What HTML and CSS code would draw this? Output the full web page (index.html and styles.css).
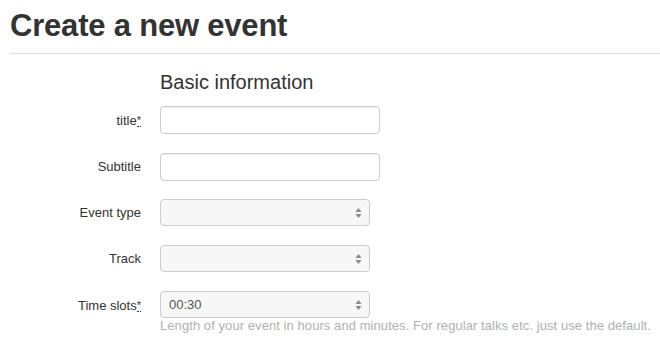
FILE: index.html
```html
<!DOCTYPE html>
<html>
<head>
<meta charset="utf-8">
<link rel="stylesheet" href="styles.css">
</head>
<body>
<h1 class="page-title">Create a new event</h1>
<form class="form">
  <div class="legend">Basic information</div>
  <div class="rows">
    <div class="row">
      <label class="label">title<abbr class="req" title="required">*</abbr></label>
      <div class="field"><input class="input" type="text"></div>
    </div>
    <div class="row">
      <label class="label">Subtitle</label>
      <div class="field"><input class="input" type="text"></div>
    </div>
    <div class="row">
      <label class="label">Event type</label>
      <div class="field"><div class="select"><span class="value"></span><span class="arrows"><svg width="7" height="12" viewBox="0 0 7 12"><path d="M3.5 1 L6.5 5 H0.5 Z" fill="#8a8a8a"/><path d="M3.5 11 L6.5 7 H0.5 Z" fill="#8a8a8a"/></svg></span></div></div>
    </div>
    <div class="row">
      <label class="label">Track</label>
      <div class="field"><div class="select"><span class="value"></span><span class="arrows"><svg width="7" height="12" viewBox="0 0 7 12"><path d="M3.5 1 L6.5 5 H0.5 Z" fill="#8a8a8a"/><path d="M3.5 11 L6.5 7 H0.5 Z" fill="#8a8a8a"/></svg></span></div></div>
    </div>
    <div class="row">
      <label class="label">Time slots<abbr class="req" title="required">*</abbr></label>
      <div class="field"><div class="select"><span class="value">00:30</span><span class="arrows"><svg width="7" height="12" viewBox="0 0 7 12"><path d="M3.5 1 L6.5 5 H0.5 Z" fill="#8a8a8a"/><path d="M3.5 11 L6.5 7 H0.5 Z" fill="#8a8a8a"/></svg></span></div>
      <p class="help">Length of your event in hours and minutes. For regular talks etc. just use the default.</p></div>
    </div>
  </div>
</form>
</body>
</html>
```
FILE: styles.css
```css
html, body { margin: 0; padding: 0; background: #fff; }
body {
  font-family: "Liberation Sans", Arial, sans-serif;
  color: #333;
  padding: 0 0 0 10px;
}
.page-title {
  margin: 0;
  padding-top: 9px;
  padding-bottom: 10px;
  font-size: 31px;
  line-height: 34px;
  font-weight: bold;
  color: #333;
  border-bottom: 1px solid #ddd;
  letter-spacing: -0.2px;
}
.form { margin: 0; }
.legend {
  margin: 15px 0 0 150px;
  font-size: 20px;
  line-height: 26px;
  color: #333;
}
.rows {
  margin-top: 11px;
  display: flex;
  flex-direction: column;
  gap: 18px;
}
.row {
  display: flex;
  align-items: flex-start;
}
.label {
  width: 131px;
  text-align: right;
  font-size: 13px;
  line-height: 28px;
  color: #333;
  padding-right: 19px;
}
.req {
  text-decoration: none;
  border-bottom: 1px dotted #333;
  cursor: help;
  font-size: 11px;
  vertical-align: 1px;
}
.field { display: flex; flex-direction: column; }
.input {
  box-sizing: border-box;
  width: 220px;
  height: 28px;
  margin: 0;
  border: 1px solid #ccc;
  border-radius: 4px;
  background: #fff;
  box-shadow: inset 0 1px 1px rgba(0,0,0,0.06);
  font: 13px "Liberation Sans", Arial, sans-serif;
}
.select {
  box-sizing: border-box;
  width: 210px;
  height: 27px;
  border: 1px solid #ccc;
  border-radius: 4px;
  background: #f7f7f7;
  display: flex;
  align-items: center;
  justify-content: space-between;
  padding: 0 7px 0 8px;
  font-size: 13px;
  color: #555;
}
.arrows { display: flex; align-items: center; }
.help {
  margin: 0;
  font-size: 13px;
  line-height: 15px;
  letter-spacing: 0.07px;
  color: #b0b0b0;
  white-space: nowrap;
}
```
